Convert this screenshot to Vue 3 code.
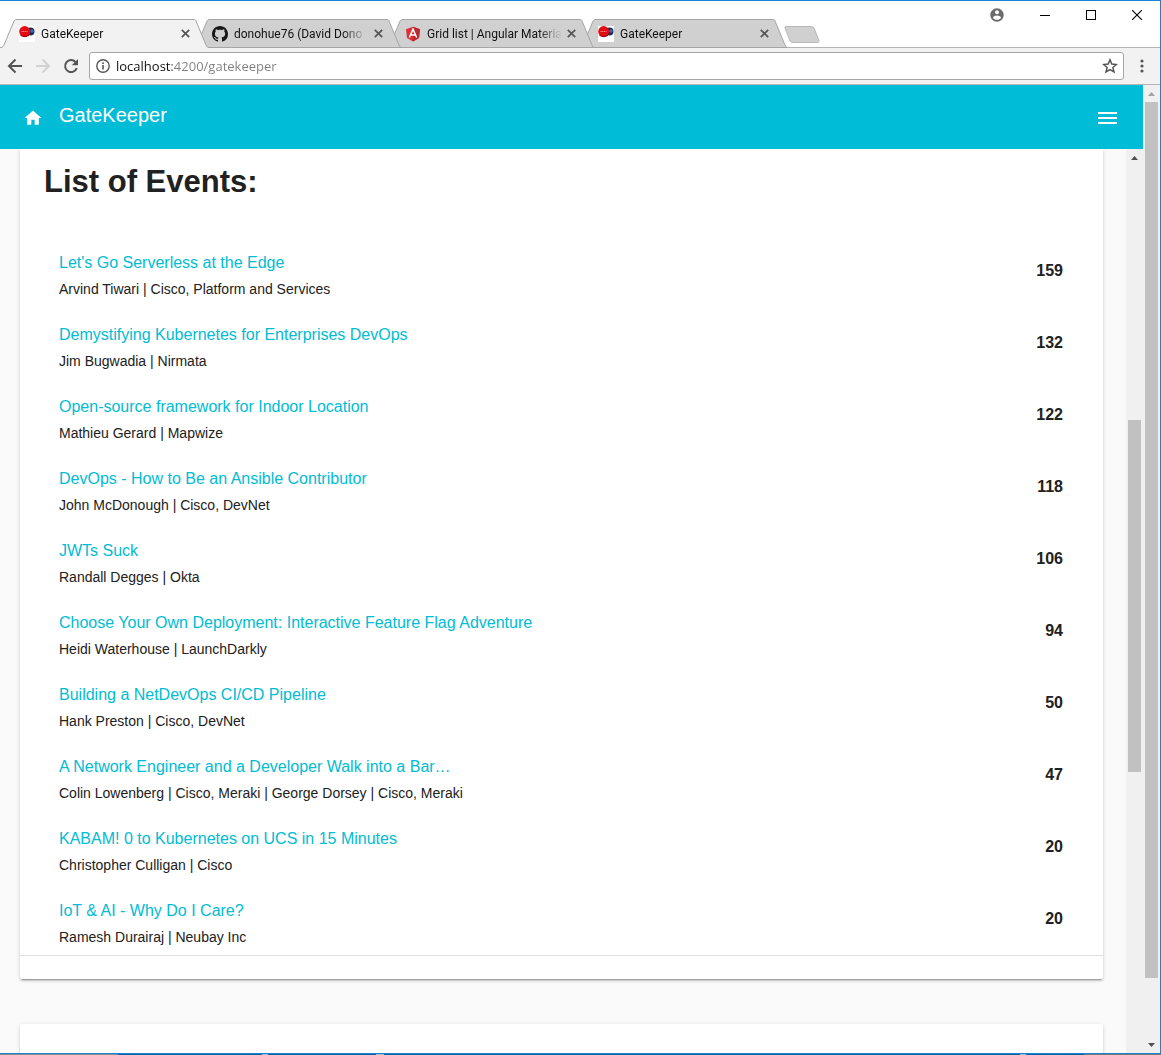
<script setup>
import { ref } from 'vue'

const address = ref('localhost:4200/gatekeeper')

const tabs = [
  { title: 'GateKeeper', icon: 'balls', active: true },
  { title: 'donohue76 (David Dono', icon: 'github' },
  { title: 'Grid list | Angular Materia', icon: 'angular' },
  { title: 'GateKeeper', icon: 'balls' },
]

const events = [
  { title: "Let's Go Serverless at the Edge", speaker: 'Arvind Tiwari | Cisco, Platform and Services', count: 159 },
  { title: 'Demystifying Kubernetes for Enterprises DevOps', speaker: 'Jim Bugwadia | Nirmata', count: 132 },
  { title: 'Open-source framework for Indoor Location', speaker: 'Mathieu Gerard | Mapwize', count: 122 },
  { title: 'DevOps - How to Be an Ansible Contributor', speaker: 'John McDonough | Cisco, DevNet', count: 118 },
  { title: 'JWTs Suck', speaker: 'Randall Degges | Okta', count: 106 },
  { title: 'Choose Your Own Deployment: Interactive Feature Flag Adventure', speaker: 'Heidi Waterhouse | LaunchDarkly', count: 94 },
  { title: 'Building a NetDevOps CI/CD Pipeline', speaker: 'Hank Preston | Cisco, DevNet', count: 50 },
  { title: 'A Network Engineer and a Developer Walk into a Bar…', speaker: 'Colin Lowenberg | Cisco, Meraki | George Dorsey | Cisco, Meraki', count: 47 },
  { title: 'KABAM! 0 to Kubernetes on UCS in 15 Minutes', speaker: 'Christopher Culligan | Cisco', count: 20 },
  { title: 'IoT & AI - Why Do I Care?', speaker: 'Ramesh Durairaj | Neubay Inc', count: 20 },
]

const pageScroll = { before: 0, size: 93.8 }
const listScroll = { before: 28.6, size: 39.7 }
</script>

<template>
  <div class="desktop">
    <div class="window">
      <header class="tabstrip">
        <ul class="tabs">
          <li
            v-for="(tab, i) in tabs"
            :key="i"
            class="tab"
            :class="{ active: tab.active }"
            :style="{ zIndex: tabs.length - i }"
          >
            <svg class="tab-shape" viewBox="0 0 210 29" aria-hidden="true">
              <path class="tab-fill" d="M2 29V28C3 28 4 27 4 26L14 2C15 1 15 .5 17 .5H194C195 .5 196 1 196 2L206 26C207 28 207 28 209 28V29Z" />
              <path class="tab-line" d="M0 28.500C3 28.500 3.500 27 4 26L14 2C15 1 15 .5 17 .5H194C195 .5 196 1 196 2L206 26C207 28 207 28.500 209 28.500" />
              <path v-if="!tab.active" class="tab-line" d="M14 28.500H209" />
            </svg>
            <a href="#" class="tab-link">
              <svg v-if="tab.icon === 'balls'" class="favicon" viewBox="0 0 16 16" aria-hidden="true">
                <rect width="16" height="16" fill="#fff" />
                <circle cx="11.500" cy="5.500" r="4" fill="#1b2b52" />
                <circle cx="13" cy="5" r="1.800" fill="#3d68a8" />
                <ellipse cx="5.700" cy="5.500" rx="5.500" ry="5.400" fill="#e30b13" />
                <path d="M2.500 5.500H8.500" stroke="#f08080" stroke-width="1" stroke-dasharray="1.300 .4" />
                <path d="M1.500 9.500Q6 12 10 9.500" stroke="#8d0910" fill="none" />
              </svg>
              <svg v-else-if="tab.icon === 'github'" class="favicon" viewBox="0 0 16 16" aria-hidden="true">
                <path fill="#191717" d="M8 0C3.580 0 0 3.580 0 8c0 3.540 2.290 6.530 5.470 7.590.4.070.55-.17.55-.38 0-.19-.01-.82-.01-1.490-2.010.37-2.530-.49-2.690-.94-.09-.23-.48-.94-.82-1.130-.28-.15-.68-.52-.01-.53.63-.01 1.080.58 1.230.82.72 1.210 1.870.87 2.330.66.070-.52.28-.87.51-1.070-1.780-.2-3.640-.89-3.640-3.950 0-.87.31-1.590.82-2.150-.08-.2-.36-1.020.08-2.120 0 0 .67-.21 2.200.82.64-.18 1.320-.27 2-.27s1.360.09 2 .27c1.530-1.040 2.200-.82 2.200-.82.44 1.100.16 1.920.08 2.120.51.56.82 1.270.82 2.150 0 3.070-1.870 3.750-3.650 3.950.29.25.54.73.54 1.480 0 1.070-.01 1.930-.01 2.200 0 .21.15.46.55.38A8.010 8.010 0 0 0 16 8c0-4.420-3.580-8-8-8z" />
              </svg>
              <svg v-else class="favicon" viewBox="0 0 16 16" aria-hidden="true">
                <path d="M8 .8L15 3.200L14 12L8 15.500L2 12L1 3.200Z" fill="#dd2f34" />
                <path d="M8 .8L15 3.200L14 12L8 15.500Z" fill="#b9292f" />
                <path d="M4.300 11.500L8 3.200L11.700 11.500M5.700 9H10.300" fill="none" stroke="#fff" stroke-width="1.500" />
              </svg>
              <span class="tab-title">{{ tab.title }}</span>
            </a>
            <button class="tab-close" type="button" aria-label="Close tab">
              <svg width="9" height="9" viewBox="0 0 9 9"><path d="M.8 .8L8.200 8.200M8.200 .8L.8 8.200" stroke="#555" stroke-width="1.700" /></svg>
            </button>
          </li>
        </ul>
        <button class="new-tab" type="button" aria-label="New tab">
          <svg width="36" height="18" viewBox="0 0 36 18"><path d="M2 .5H27Q29 .5 30 2L35 14.500Q35.500 16.500 33.500 16.500H9Q7 16.500 6 15L1 2Q.5 .5 2 .5Z" fill="#d0d0d0" stroke="#b8b8b8" /></svg>
        </button>
        <div class="window-controls">
          <button type="button" class="profile" aria-label="Profile">
            <svg width="16" height="16" viewBox="0 0 24 24"><path fill="#6b6b6b" d="M12 2C6.480 2 2 6.480 2 12s4.480 10 10 10 10-4.480 10-10S17.520 2 12 2zm0 3c1.660 0 3 1.340 3 3s-1.340 3-3 3-3-1.340-3-3 1.340-3 3-3zm0 14.200c-2.500 0-4.710-1.280-6-3.220.03-1.990 4-3.080 6-3.080 1.990 0 5.970 1.090 6 3.080-1.290 1.940-3.500 3.220-6 3.220z" /></svg>
          </button>
          <button type="button" aria-label="Minimize">
            <svg width="10" height="12" viewBox="0 0 10 12"><path d="M0 6.500H10" stroke="#000" /></svg>
          </button>
          <button type="button" aria-label="Maximize">
            <svg width="10" height="10" viewBox="0 0 10 10"><rect x=".5" y=".5" width="9" height="9" fill="none" stroke="#000" /></svg>
          </button>
          <button type="button" aria-label="Close">
            <svg width="10" height="10" viewBox="0 0 10 10"><path d="M0 0L10 10M10 0L0 10" stroke="#000" stroke-width="1.100" /></svg>
          </button>
        </div>
      </header>

      <nav class="toolbar" aria-label="Browser">
        <button type="button" aria-label="Back">
          <svg width="16" height="16" viewBox="0 0 16 16"><path d="M15 8H2.500M8.500 1.500L2 8L8.500 14.500" fill="none" stroke="#555" stroke-width="2" /></svg>
        </button>
        <button type="button" aria-label="Forward">
          <svg width="16" height="16" viewBox="0 0 16 16"><path d="M1 8H13.500M7.500 1.500L14 8L7.500 14.500" fill="none" stroke="#d2d2d2" stroke-width="2" /></svg>
        </button>
        <button type="button" aria-label="Reload">
          <svg width="16" height="16" viewBox="0 0 16 16"><path d="M13.800 10A6 6 0 1 1 12.500 4" fill="none" stroke="#555" stroke-width="2" /><path d="M15 1V7.200H8.800Z" fill="#555" /></svg>
        </button>
        <div class="omnibox">
          <svg width="14" height="14" viewBox="0 0 14 14" aria-hidden="true"><circle cx="7" cy="7" r="6.200" fill="none" stroke="#555" stroke-width="1.400" /><path d="M7 6V10.500M7 3.300V4.900" stroke="#555" stroke-width="1.600" /></svg>
          <input v-model="address" class="address" type="text" aria-label="Address" spellcheck="false" />
          <button type="button" class="star" aria-label="Bookmark">
            <svg width="16" height="16" viewBox="0 0 16 16"><path d="M8 1.800L9.800 6.100L14.400 6.500L10.900 9.500L12 14L8 11.600L4 14L5.100 9.500L1.600 6.500L6.200 6.100Z" fill="none" stroke="#555" stroke-width="1.500" /></svg>
          </button>
        </div>
        <button type="button" aria-label="Menu">
          <svg width="4" height="14" viewBox="0 0 4 14"><g fill="#555"><circle cx="2" cy="2" r="1.600" /><circle cx="2" cy="7" r="1.600" /><circle cx="2" cy="12" r="1.600" /></g></svg>
        </button>
      </nav>

      <div class="viewport">
        <div class="app">
          <div class="appbar">
            <a href="#" class="home" aria-label="Home">
              <svg width="20" height="20" viewBox="0 0 24 24"><path fill="#fff" d="M10 20v-6h4v6h5v-8h3L12 3 2 12h3v8z" /></svg>
            </a>
            <span class="brand">GateKeeper</span>
            <button type="button" class="menu" aria-label="Menu">
              <svg width="24" height="24" viewBox="0 0 24 24"><path fill="#fff" d="M3 18h19v-2H3v2zm0-5h19v-2H3v2zm0-7v2h19V6H3z" /></svg>
            </button>
          </div>
          <div class="body">
            <main class="content">
              <section class="card">
                <h1>List of Events:</h1>
                <ul class="events">
                  <li v-for="event in events" :key="event.title" class="event">
                    <div class="info">
                      <h3><a href="#">{{ event.title }}</a></h3>
                      <p>{{ event.speaker }}</p>
                    </div>
                    <strong class="count">{{ event.count }}</strong>
                  </li>
                </ul>
              </section>
              <section class="card next"></section>
            </main>
            <div class="scrollbar">
              <div class="arrow"><svg width="7" height="4" viewBox="0 0 7 4"><path d="M0 4L3.500 0L7 4Z" fill="#505050" /></svg></div>
              <div class="track">
                <div class="thumb" :style="{ top: listScroll.before + '%', height: listScroll.size + '%' }"></div>
              </div>
            </div>
          </div>
        </div>
        <div class="scrollbar">
          <div class="arrow"><svg width="7" height="4" viewBox="0 0 7 4"><path d="M0 4L3.500 0L7 4Z" fill="#a3a3a3" /></svg></div>
          <div class="track">
            <div class="thumb" :style="{ top: pageScroll.before + '%', height: pageScroll.size + '%' }"></div>
          </div>
          <div class="arrow"><svg width="7" height="4" viewBox="0 0 7 4"><path d="M0 0L3.500 4L7 0Z" fill="#505050" /></svg></div>
        </div>
      </div>
    </div>
    <div class="taskbar"></div>
  </div>
</template>

<style>
body {
  margin: 0;
}
</style>

<style scoped>
* {
  box-sizing: border-box;
}
.desktop {
  display: flex;
  flex-direction: column;
  height: 100vh;
  font-family: "Liberation Sans", Arial, sans-serif;
  color: #212121;
}
.window {
  flex: 1;
  min-height: 0;
  display: flex;
  flex-direction: column;
  background: #fff;
  border: solid #1883d7;
  border-width: 1px 1px 1px 0;
}
.taskbar {
  height: 1px;
  background: linear-gradient(to right, #8a8a8a 118px, #0063a8 118px, #0063a8 262px, #b5b5b5 262px, #b5b5b5 268px, #0063a8 268px, #0063a8 376px, #b5b5b5 376px, #b5b5b5 384px, #0063a8 384px, #0063a8 1020px, #b5b5b5 1020px, #b5b5b5 1026px, #0063a8 1026px, #0063a8 1084px, #777 1084px);
}
button {
  display: flex;
  align-items: center;
  justify-content: center;
  padding: 0;
  border: 0;
  background: none;
}
ul {
  list-style: none;
  margin: 0;
  padding: 0;
}
a {
  color: inherit;
  text-decoration: none;
}

.tabstrip {
  display: flex;
  height: 47px;
  box-shadow: inset 0 -1px #b4b4b4;
}
.tabs {
  display: flex;
  align-items: flex-end;
}
.tab {
  position: relative;
  display: flex;
  align-items: center;
  width: 193px;
  height: 29px;
  padding-left: 19px;
}
.tab-shape {
  position: absolute;
  left: 0;
  top: 0;
  width: 210px;
  height: 29px;
}
.tab-fill {
  fill: #d0d0d0;
}
.tab-line {
  fill: none;
  stroke: #a5a5a5;
}
.active .tab-fill {
  fill: #f2f2f2;
}
.tab-link {
  position: relative;
  display: flex;
  align-items: center;
  gap: 6px;
  width: 156px;
}
.favicon {
  flex: none;
  width: 16px;
  height: 16px;
}
.tab-title {
  flex: 1;
  white-space: nowrap;
  font: 12px/16px Roboto, "Open Sans", sans-serif;
  color: #111;
  -webkit-mask-image: linear-gradient(to left, transparent, #000 24px);
  mask-image: linear-gradient(to left, transparent, #000 24px);
}
.tab-close {
  position: relative;
  width: 16px;
  height: 16px;
  margin-left: 3px;
}
.new-tab {
  align-self: flex-end;
  margin: 0 0 4px 12px;
}
.window-controls {
  display: flex;
  height: 28px;
  margin-left: auto;
}
.window-controls button {
  width: 46px;
}
.window-controls .profile {
  width: 50px;
}

.toolbar {
  display: flex;
  align-items: center;
  height: 37px;
  gap: 12px;
  padding: 0 16px 0 7px;
  background: #f2f2f2;
  border-bottom: 1px solid #b4b4b4;
}
.omnibox {
  flex: 1;
  display: flex;
  align-items: center;
  gap: 6px;
  height: 28px;
  margin: 0 4px 0 -2px;
  padding: 0 5px 0 6px;
  background: #fff;
  border: 1px solid #a6a6a6;
  border-radius: 3px;
}
.address {
  flex: 1;
  min-width: 0;
  height: 20px;
  padding: 0;
  border: 0;
  outline: 0;
  font: 13px/20px "Open Sans", "Noto Sans", sans-serif;
  color: transparent;
  caret-color: #000;
  background: linear-gradient(to right, #111 56px, #808080 56px);
  -webkit-background-clip: text;
  background-clip: text;
}

.viewport {
  flex: 1;
  min-height: 0;
  display: flex;
}
.app {
  flex: 1;
  min-width: 0;
  display: flex;
  flex-direction: column;
}
.appbar {
  flex: none;
  display: flex;
  align-items: center;
  height: 64px;
  padding: 0 24px 0 23px;
  background: #00bcd7;
  color: #fff;
}
.home {
  display: flex;
  padding-top: 2px;
}
.brand {
  margin-left: 16px;
  padding-bottom: 4px;
  font-size: 20px;
  line-height: 24px;
}
.menu {
  margin-left: auto;
  padding-top: 2px;
}
.body {
  flex: 1;
  min-height: 0;
  display: flex;
}
.content {
  flex: 1;
  min-width: 0;
  overflow: hidden;
  padding: 0 23px 0 20px;
  background: #fafafa;
}
.card {
  background: #fff;
  border-radius: 0 0 2px 2px;
  padding-bottom: 23px;
  box-shadow: 0 3px 1px -2px rgba(0, 0, 0, 0.2), 0 2px 2px 0 rgba(0, 0, 0, 0.14), 0 1px 5px 0 rgba(0, 0, 0, 0.12);
}
.next {
  height: 120px;
  margin-top: 45px;
  border-radius: 2px;
}
h1 {
  margin: 0;
  padding: 13px 24px 33px;
  font-size: 31px;
  line-height: 40px;
}
.events {
  border-bottom: 1px solid #e0e0e0;
  padding: 0 40px 0 39px;
}
.event {
  display: flex;
  align-items: center;
  justify-content: space-between;
  height: 72px;
}
.info {
  padding-top: 8px;
}
h3 {
  margin: 0 0 8px;
  font-size: 16px;
  font-weight: 400;
  line-height: 20px;
  color: #00bcd4;
}
p {
  margin: 0;
  font-size: 14px;
  line-height: 16px;
}
.count {
  font-size: 16px;
  line-height: 20px;
}

.scrollbar {
  flex: none;
  display: flex;
  flex-direction: column;
  width: 17px;
  background: #f0f0f0;
}
.arrow {
  flex: none;
  display: flex;
  align-items: center;
  justify-content: center;
  height: 17px;
}
.track {
  position: relative;
  flex: 1;
}
.thumb {
  position: absolute;
  left: 2px;
  width: 13px;
  background: #c1c1c1;
}
</style>
